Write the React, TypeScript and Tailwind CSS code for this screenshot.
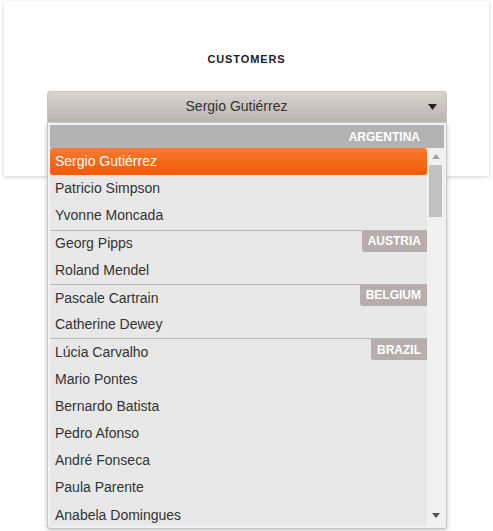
import React from "react";

type Row = { name: string; group?: string; selected?: boolean };

const rows: Row[] = [
  { name: "Sergio Gutiérrez", selected: true },
  { name: "Patricio Simpson" },
  { name: "Yvonne Moncada" },
  { name: "Georg Pipps", group: "AUSTRIA" },
  { name: "Roland Mendel" },
  { name: "Pascale Cartrain", group: "BELGIUM" },
  { name: "Catherine Dewey" },
  { name: "Lúcia Carvalho", group: "BRAZIL" },
  { name: "Mario Pontes" },
  { name: "Bernardo Batista" },
  { name: "Pedro Afonso" },
  { name: "André Fonseca" },
  { name: "Paula Parente" },
  { name: "Anabela Domingues" },
];

export default function App() {
  return (
    <div
      className="relative w-[493px] h-[531px] bg-white overflow-hidden"
      style={{ fontFamily: '"Liberation Sans", Arial, sans-serif' }}
    >
      <div className="ml-[4px] mt-[1px] w-[485px] h-[175px] bg-white shadow-[0_1px_4px_rgba(0,0,0,0.18)] flex flex-col items-center">
        <div className="mt-[50px] text-[11px] font-bold tracking-[0.9px] text-[#222]">CUSTOMERS</div>
        <div className="mt-[23px] relative w-[400px] h-[31px] rounded-t-[3px] border border-[#c9c3c0] bg-[linear-gradient(#d8d4d1,#bdb4af)] flex items-center pr-[20px]">
          <div className="flex-1 text-center text-[14px] text-[#333]">Sergio Gutiérrez</div>
          <svg className="absolute right-[9px] top-[12px]" width="9" height="6" viewBox="0 0 9 6">
            <path d="M0 0H9L4.5 6Z" fill="#222" />
          </svg>
        </div>
      </div>

      <div className="absolute left-[47px] top-[122px] w-[400px] h-[407px] border border-[#c6c6c6] bg-[#f2f2f2] p-[2px] rounded-b-[3px] shadow-[0_2px_5px_rgba(0,0,0,0.22)] flex flex-col">
        <div className="h-[23px] shrink-0 bg-[#b3b3b3] flex items-center justify-end pr-[24px] text-[12px] font-bold text-white">
          ARGENTINA
        </div>
        <div className="flex flex-1 overflow-hidden">
          <div className="w-[377px] bg-[#e8e8e8] flex flex-col">
            {rows.map((r) =>
              r.selected ? (
                <div
                  key={r.name}
                  className="h-[27.2px] shrink-0 flex items-center pl-[5px] rounded-[3px] bg-[linear-gradient(#f67b36,#f25a03)] text-white text-[14px]"
                >
                  {r.name}
                </div>
              ) : (
                <div
                  key={r.name}
                  className={
                    "relative h-[27.2px] shrink-0 flex items-center pl-[5px] text-[14px] text-[#333] " +
                    (r.group ? "border-t border-[#b8b8b8]" : "")
                  }
                >
                  {r.name}
                  {r.group && (
                    <div className="absolute right-0 top-0 h-[21px] px-[6px] flex items-center bg-[#b5aeac] text-white text-[12px] font-bold rounded-bl-[3px]">
                      {r.group}
                    </div>
                  )}
                </div>
              )
            )}
          </div>
          <div className="w-[17px] bg-[#f1f1f1] relative">
            <svg className="absolute left-[5px] top-[6px]" width="8" height="5" viewBox="0 0 8 5">
              <path d="M0 5H8L4 0Z" fill="#a3a3a3" />
            </svg>
            <div className="absolute left-[2px] top-[17px] w-[13px] h-[52px] bg-[#c1c1c1]" />
            <svg className="absolute left-[5px] bottom-[8px]" width="8" height="5" viewBox="0 0 8 5">
              <path d="M0 0H8L4 5Z" fill="#505050" />
            </svg>
          </div>
        </div>
      </div>
    </div>
  );
}
